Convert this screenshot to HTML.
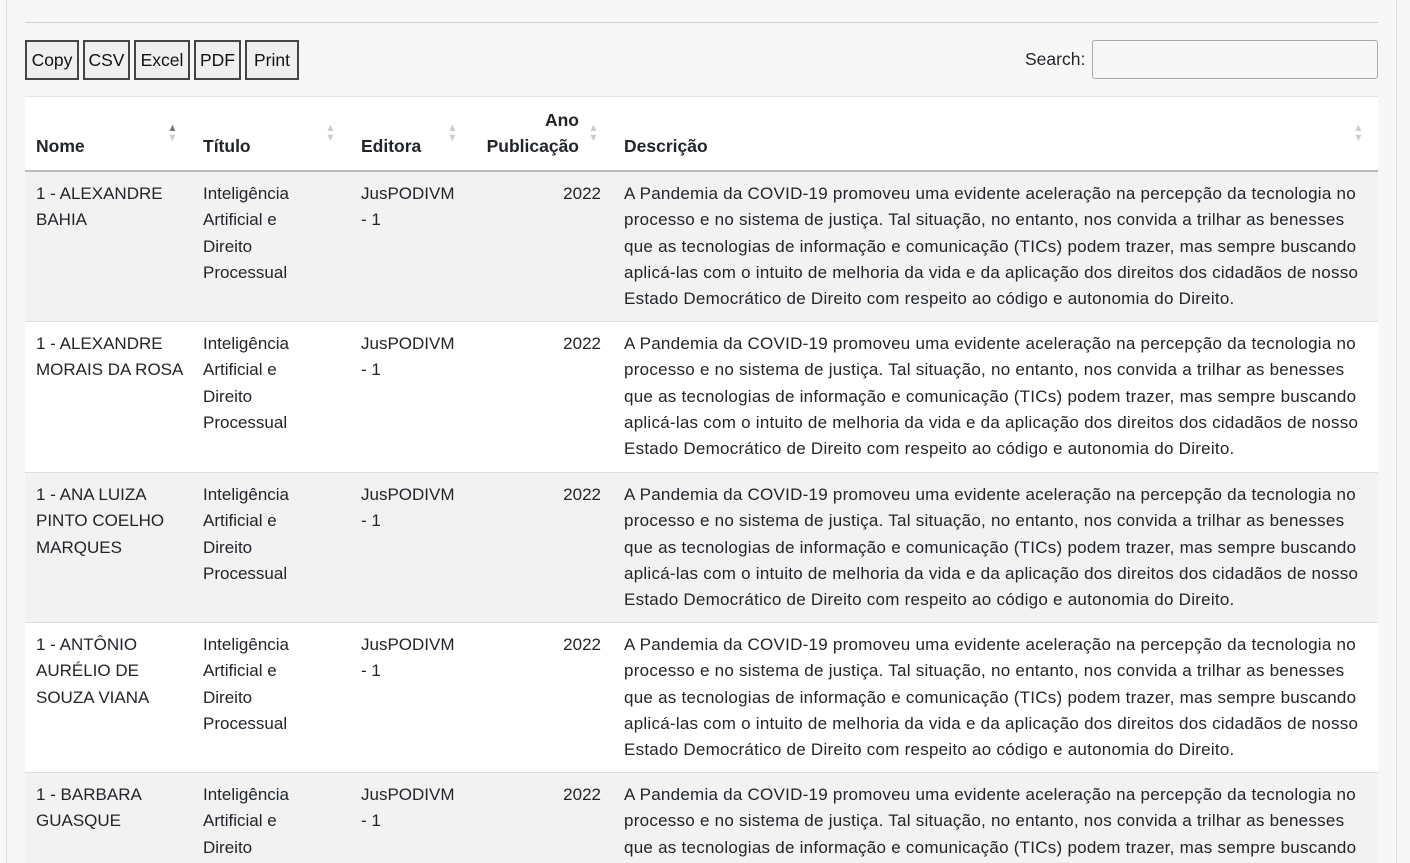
<!DOCTYPE html>
<html><head><meta charset="utf-8"><style>
*{margin:0;padding:0;box-sizing:border-box}
html,body{width:1410px;height:863px;overflow:hidden}
body{background:#f7f7f7;font-family:"Liberation Sans","DejaVu Sans",sans-serif;color:#212529;position:relative}
.card{position:absolute;left:6px;top:-2px;width:1391px;height:865px;border-left:1px solid #ddd;border-right:1px solid #ddd;background:#f7f7f7}
.hr{position:absolute;left:25px;top:22px;width:1353px;height:1px;background:#cfcfcf}
.btn{position:absolute;top:40px;height:40px;border:2px solid #444;background:#efefef;font-size:17.5px;line-height:36px;text-align:center;color:#111}
.lbl{position:absolute;left:1025px;top:49px;font-size:17.5px}
.search{position:absolute;left:1092px;top:40px;width:286px;height:39px;border:1px solid #aaa;border-radius:3px;background:#f7f7f7}
.thead{position:absolute;left:25px;top:96px;width:1353px;height:76px;background:#fff;border-top:1px solid #e3e3e3;border-bottom:2px solid #bbb}
.th{position:absolute;font-weight:bold;font-size:17.5px;line-height:26px;white-space:nowrap}
.sort{position:absolute;font-size:11px;line-height:10px;color:#ccc;transform:scaleX(0.9)}
.row{position:absolute;left:25px;width:1353px;border-bottom:1px solid #ddd;overflow:hidden}
.c{position:absolute;top:9px;font-size:17px;line-height:26.3px;white-space:nowrap}
</style></head><body>
<div class="card"></div>
<div class="hr"></div>
<div class="btn" style="left:25px;width:54px">Copy</div>
<div class="btn" style="left:83px;width:47px">CSV</div>
<div class="btn" style="left:134px;width:56px">Excel</div>
<div class="btn" style="left:194px;width:47px">PDF</div>
<div class="btn" style="left:245px;width:54px">Print</div>
<div class="lbl">Search:</div>
<div class="search"></div>
<div class="thead">
<div class="th" style="left:11px;top:36px">Nome</div>
<div class="th" style="left:178px;top:36px">Título</div>
<div class="th" style="left:336px;top:36px">Editora</div>
<div class="th" style="left:460px;top:10px;width:94px;text-align:right">Ano<br>Publicação</div>
<div class="th" style="left:599px;top:36px">Descrição</div>
<div class="sort" style="left:142px;top:26px"><span style="color:#777">▲</span><br>▼</div>
<div class="sort" style="left:300px;top:26px">▲<br>▼</div>
<div class="sort" style="left:422px;top:26px">▲<br>▼</div>
<div class="sort" style="left:563px;top:26px">▲<br>▼</div>
<div class="sort" style="left:1328px;top:26px">▲<br>▼</div>
</div>
<div id="rows"></div>
<script>
var names=["1 - ALEXANDRE<br>BAHIA","1 - ALEXANDRE<br>MORAIS DA ROSA","1 - ANA LUIZA<br>PINTO COELHO<br>MARQUES","1 - ANTÔNIO<br>AURÉLIO DE<br>SOUZA VIANA","1 - BARBARA<br>GUASQUE"];
var tops=[172,322,473,623,773];
var d="A Pandemia da COVID-19 promoveu uma evidente aceleração na percepção da tecnologia no<br>processo e no sistema de justiça. Tal situação, no entanto, nos convida a trilhar as benesses<br>que as tecnologias de informação e comunicação (TICs) podem trazer, mas sempre buscando<br>aplicá-las com o intuito de melhoria da vida e da aplicação dos direitos dos cidadãos de nosso<br>Estado Democrático de Direito com respeito ao código e autonomia do Direito.";
var h="";
for(var i=0;i<5;i++){
h+='<div class="row" style="top:'+tops[i]+'px;height:'+(i<4?(tops[i+1]-tops[i]):90)+'px;background:'+(i%2?'#fff':'#f2f2f2')+';'+(i==4?'border-bottom:none':'')+'">'+
'<div class="c" style="left:11px">'+names[i]+'</div>'+
'<div class="c" style="left:178px">Inteligência<br>Artificial e<br>Direito<br>Processual</div>'+
'<div class="c" style="left:336px">JusPODIVM<br>- 1</div>'+
'<div class="c" style="left:500px;width:76px;text-align:right">2022</div>'+
'<div class="c" style="left:599px;letter-spacing:0.25px">'+d+'</div></div>';
}
document.getElementById('rows').innerHTML=h;
</script>
</body></html>
